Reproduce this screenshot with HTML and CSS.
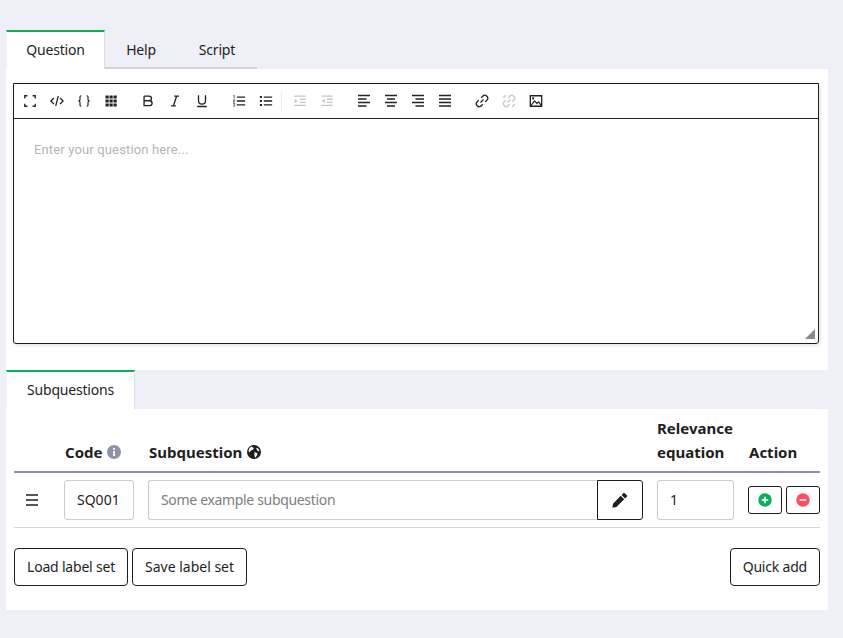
FILE: index.html
```html
<!DOCTYPE html>
<html lang="en">
<head>
  <meta charset="UTF-8">
  <meta name="viewport" content="width=device-width, initial-scale=1.0">
  <title>Question editor</title>
  <link rel="stylesheet" href="styles.css">
</head>
<body>

  <!-- Question tabs -->
  <div class="tabs">
    <div class="tab tab-active tab-question">Question</div>
    <div class="tab tab-plain tab-help">Help</div>
    <div class="tab tab-plain tab-script">Script</div>
  </div>

  <div class="panel editor-panel">
    <div class="editor">
      <div class="toolbar">
        <div class="tool-group">
          <span class="tool"><svg viewBox="0 0 16 16"><path d="M2 5V2h3M11 2h3v3M14 11v3h-3M5 14H2v-3"/></svg></span>
          <span class="tool"><svg viewBox="0 0 16 16"><path d="M4.500 4.500 1 8l3.500 3.500M11.500 4.500 15 8l-3.500 3.500M9.500 2.500l-3 11"/></svg></span>
          <span class="tool"><svg viewBox="0 0 16 16"><path class="mid" d="M5 2h-.3C3.900 2 3.400 2.500 3.400 3.300v3.200C3.400 7.400 2.900 8 1.500 8c1.400 0 1.900.6 1.900 1.500v3.200c0 .8.500 1.300 1.300 1.300H5M11 2h.3c.8 0 1.300.5 1.300 1.300v3.200c0 .9.500 1.500 1.900 1.500-1.400 0-1.900.6-1.900 1.500v3.200c0 .8-.5 1.300-1.300 1.300H11"/></svg></span>
          <span class="tool"><svg viewBox="0 0 14 14"><path class="fill" d="M1.500 1.500h3.200v3H1.500zM5.500 1.500h3.200v3H5.500zM9.500 1.500h3.200v3H9.500zM1.500 5.500h3.200v3H1.500zM5.500 5.500h3.200v3H5.500zM9.500 5.500h3.200v3H9.500zM1.500 9.500h3.200v3H1.500zM5.500 9.500h3.200v3H5.500zM9.500 9.500h3.200v3H9.500z"/></svg></span>
        </div>
        <div class="tool-group">
          <span class="tool"><svg viewBox="0 0 16 16"><path d="M3.500 2.500h5.500c1.900 0 3 1 3 2.600S10.900 7.700 9 7.700H3.500M3.500 7.700h6c2 0 3.200 1 3.200 2.800s-1.200 2.800-3.200 2.800h-6zM3.500 2.500v5.200"/></svg></span>
          <span class="tool"><svg viewBox="0 0 16 16"><path d="M7 2.500h5.500M3.500 13.500H9M9.800 2.500l-3.600 11"/></svg></span>
          <span class="tool"><svg viewBox="0 0 16 16"><path d="M4 1.500v6.300c0 2.400 1.500 3.700 4 3.700s4-1.300 4-3.700V1.500M2.500 14.300h11"/></svg></span>
        </div>
        <div class="tool-group tool-group-split">
          <span class="tool"><svg viewBox="0 0 16 16"><path d="M5.500 3.500H15M5.500 8H15M5.500 12.500H15"/><path class="thin" d="M1.500 2l1-.5v3.500M1.200 6.800h2L1.200 9.200h2M1.200 11h2l-1 1.300c.7 0 1 .4 1 .9s-.5.8-2 .8"/></svg></span>
          <span class="tool"><svg viewBox="0 0 16 16"><path d="M5.500 3.500H15M5.500 8H15M5.500 12.500H15"/><path class="fill" d="M1 2.300h2.400v2.400H1zM1 6.800h2.400v2.400H1zM1 11.300h2.400v2.400H1z"/></svg></span>
        </div>
        <div class="tool-group tool-group-off">
          <span class="tool"><svg viewBox="0 0 16 16"><path d="M1.500 2.500h13M8 6h6.500M8 9.500h6.500M1.500 13h13"/><path class="fill" d="M2 5.500 5.500 8 2 10.500z"/></svg></span>
          <span class="tool"><svg viewBox="0 0 16 16"><path d="M1.500 2.500h13M8 6h6.500M8 9.500h6.500M1.500 13h13"/><path class="fill" d="M5.500 5.500 2 8l3.500 2.500z"/></svg></span>
        </div>
        <div class="tool-group">
          <span class="tool"><svg viewBox="0 0 14 14"><path d="M1 1.500h12M1 5h8.500M1 8.500h12M1 12h8.500"/></svg></span>
          <span class="tool"><svg viewBox="0 0 14 14"><path d="M1 1.500h12M3 5h8M1 8.500h12M3 12h8"/></svg></span>
          <span class="tool"><svg viewBox="0 0 14 14"><path d="M1 1.500h12M4.500 5H13M1 8.500h12M4.500 12H13"/></svg></span>
          <span class="tool"><svg viewBox="0 0 14 14"><path d="M1 1.500h12M1 5h12M1 8.500h12M1 12h12"/></svg></span>
        </div>
        <div class="tool-group">
          <span class="tool"><svg viewBox="0 0 16 16"><path d="M6.300 9.700l3.400-3.400M7 4.300l1.800-1.800a3 3 0 0 1 4.700 4.700l-1.800 1.800M9 11.700l-1.800 1.800a3 3 0 0 1-4.700-4.700l1.800-1.800"/></svg></span>
          <span class="tool tool-off"><svg viewBox="0 0 16 16"><path d="M7.500 4.300l1.300-1.800a3 3 0 0 1 4.700 4.700l-1.800 1.300M8.500 11.700l-1.300 1.800a3 3 0 0 1-4.700-4.700l1.800-1.300M6.300 9.700l3.400-3.400M3.500 1v2.500M1 3.500h2.500M12.500 12.500V15M12.500 12.500H15"/></svg></span>
          <span class="tool"><svg viewBox="0 0 16 16"><path d="M1.500 2h13v12h-13z"/><path class="outline" d="M2 13.500 6.300 7.800l3.400 3.900M9 10.800l2-1.800 3 4"/><circle class="fill" cx="4.800" cy="5" r="1.300"/></svg></span>
        </div>
      </div>
      <div class="editor-body">
        <span class="editor-placeholder">Enter your question here...</span>
        <span class="resize-grip"></span>
      </div>
    </div>
  </div>

  <!-- Subquestions -->
  <div class="tabs tabs-sub">
    <div class="tab tab-active tab-sub">Subquestions</div>
  </div>

  <div class="panel sub-panel">
    <div class="sub-grid sub-head">
      <div></div>
      <div class="head-cell head-indent">Code <svg class="info-icon" viewBox="0 0 14 14"><circle cx="7" cy="7" r="7"/><path d="M6.100 5.900h1.800v5H6.100zM6.100 3h1.800v1.800H6.100z" fill="#fff"/></svg></div>
      <div class="head-cell head-indent">Subquestion <svg class="globe-icon" viewBox="0 0 14 14"><circle cx="7" cy="7" r="7"/><path d="M4.500 1.500 6.800 3 6 4.800 3.800 5.500 2.500 7.500 1.500 6 2.500 3zM7.500 7l3 1.200-.5 2.300-1.800 2.300-.8-2.500zM10 2.500l2 2.200.3 1.800-1.800-.8-1.200-2z" fill="#fff"/></svg></div>
      <div class="head-cell">Relevance equation</div>
      <div class="head-cell head-indent">Action</div>
    </div>

    <div class="sub-grid sub-row">
      <div class="drag-handle"><span></span><span></span><span></span></div>
      <input class="field field-code" value="SQ001">
      <div class="input-group">
        <input class="field field-text" placeholder="Some example subquestion">
        <button class="edit-btn"><svg viewBox="0 0 16 16"><path d="M11.300 1.200a1 1 0 0 1 1.400 0l2.100 2.100a1 1 0 0 1 0 1.400l-1.700 1.700-3.500-3.500zM8.700 3.800l3.500 3.500-7.800 7.800-4 .6.600-4z"/></svg></button>
      </div>
      <input class="field field-rel" value="1">
      <div class="actions">
        <button class="icon-btn"><svg viewBox="0 0 14 14"><circle cx="7" cy="7" r="6.700" fill="#0ead5c"/><path d="M7 3.700v6.600M3.700 7h6.600" stroke="#fff" stroke-width="1.500"/></svg></button>
        <button class="icon-btn"><svg viewBox="0 0 14 14"><circle cx="7" cy="7" r="6.700" fill="#ff4d60"/><path d="M3.700 7h6.600" stroke="#fff" stroke-width="1.500"/></svg></button>
      </div>
    </div>

    <div class="button-row">
      <button class="btn">Load label set</button>
      <button class="btn btn-save">Save label set</button>
      <button class="btn btn-right">Quick add</button>
    </div>
  </div>

</body>
</html>
```

FILE: styles.css
```css
body {
  font-family: "Noto Sans", Roboto, sans-serif;
  font-size: 14px;
  color: #1e1e1e;
  margin: 0;
  padding: 30px 15px 28px 6px;
  background-color: #eeeff7;
}

/* Tabs */
.tabs {
  display: flex;
  height: 39px;
}

.tab {
  box-sizing: border-box;
  height: 39px;
  text-align: center;
  font-size: 14px;
  letter-spacing: -0.2px;
}

.tab-active {
  background-color: #fff;
  border-top: 2px solid #0ead5c;
  border-left: 1px solid #f2f3f8;
  border-right: 1px solid #dcdee6;
  line-height: 35px;
}

.tab-plain {
  border-bottom: 2px solid #d2d3da;
  line-height: 39px;
}

.tab-question { width: 99px; }
.tab-help { width: 72px; }
.tab-script { width: 80px; }
.tab-sub { width: 129px; }

/* Panels */
.panel {
  background-color: #fff;
}

.editor-panel {
  height: 301px;
  padding: 14px 9px 0 7px;
  box-sizing: border-box;
}

/* Editor */
.editor {
  box-sizing: border-box;
  height: 261px;
  border: 1px solid #1e1e1e;
  border-radius: 0 0 3px 3px;
  box-shadow: 1px 1px 4px rgba(30, 30, 60, 0.14);
  display: flex;
  flex-direction: column;
}

.toolbar {
  display: flex;
  height: 34px;
  padding-left: 2px;
  border-bottom: 1px solid #1e1e1e;
  align-items: center;
}

.tool-group {
  display: flex;
  margin-right: 10px;
}

.tool-group-split {
  position: relative;
  margin-right: 7px;
}

.tool-group-split::after {
  content: "";
  position: absolute;
  right: -3px;
  top: 4px;
  bottom: 4px;
  width: 1px;
  background-color: #eeeeee;
}

.tool {
  width: 27px;
  height: 28px;
  display: flex;
  align-items: center;
  justify-content: center;
}

.tool svg {
  width: 14px;
  height: 14px;
  fill: none;
  stroke: #222;
  stroke-width: 1.5;
}

.tool svg .fill {
  fill: #222;
  stroke: none;
}

.tool svg .mid {
  stroke-width: 1.3;
}

.tool svg .thin {
  stroke-width: 0.8;
}

.tool-group-off .tool svg,
.tool-off svg {
  opacity: 0.25;
}

.editor-body {
  flex: 1;
  position: relative;
  padding: 20px;
}

.editor-placeholder {
  font-family: Roboto, sans-serif;
  font-size: 13px;
  letter-spacing: 0.15px;
  color: #b5b5b5;
}

.resize-grip {
  position: absolute;
  right: 3px;
  bottom: 4px;
  width: 0;
  height: 0;
  border-left: 10px solid transparent;
  border-bottom: 10px solid #8a8a8a;
}

/* Subquestion table */
.sub-panel {
  height: 201px;
  padding: 0 8px;
  box-sizing: border-box;
}

.sub-grid {
  display: grid;
  grid-template-columns: 36px 70px 495px 77px 72px;
  column-gap: 14px;
}

.sub-head {
  height: 64px;
  box-sizing: border-box;
  align-items: end;
  padding-bottom: 7px;
  border-bottom: 2px solid #8f92a6;
}

.head-cell {
  font-size: 15px;
  font-weight: 700;
  line-height: 24px;
  color: #1e1e1e;
}

.head-indent {
  padding-left: 1px;
}

.info-icon,
.globe-icon {
  width: 14px;
  height: 14px;
  vertical-align: -1px;
  margin-left: 1px;
}

.info-icon { fill: #8f92a6; }
.globe-icon { fill: #1e1e1e; }

.sub-row {
  height: 55px;
  box-sizing: border-box;
  padding-top: 7px;
  border-bottom: 1px solid #d5d5d5;
}

.drag-handle {
  display: flex;
  flex-direction: column;
  gap: 3px;
  width: 12px;
  margin: 14px 0 0 12px;
}

.drag-handle span {
  height: 2px;
  background-color: #555;
}

.field {
  box-sizing: border-box;
  height: 40px;
  border: 1px solid #ccc;
  border-radius: 3px;
  font-family: "Noto Sans", Roboto, sans-serif;
  font-size: 14px;
  color: #1e1e1e;
  padding: 0 12px 2px;
  min-width: 0;
  width: 100%;
}

.field::placeholder {
  color: #7e7e7e;
  letter-spacing: -0.33px;
}

.input-group {
  display: flex;
}

.field-text {
  flex: 1;
  border-right: 0;
  border-radius: 3px 0 0 3px;
}

.edit-btn {
  box-sizing: border-box;
  width: 46px;
  height: 40px;
  padding: 0;
  background-color: #fff;
  border: 1px solid #1e1e1e;
  border-radius: 0 3px 3px 0;
  display: flex;
  align-items: center;
  justify-content: center;
}

.edit-btn svg {
  width: 16px;
  height: 16px;
  fill: #1e1e1e;
}

.actions {
  display: flex;
  gap: 4px;
  padding-top: 6px;
}

.icon-btn {
  box-sizing: border-box;
  width: 34px;
  height: 28px;
  padding: 0;
  background-color: #fff;
  border: 1px solid #1e1e1e;
  border-radius: 3px;
  display: flex;
  align-items: center;
  justify-content: center;
}

.icon-btn svg {
  width: 14px;
  height: 14px;
}

/* Bottom buttons */
.button-row {
  display: flex;
  gap: 4px;
  padding-top: 20px;
}

.btn {
  box-sizing: border-box;
  height: 38px;
  padding: 0 12px 2px;
  background-color: #fff;
  border: 1px solid #1e1e1e;
  border-radius: 4px;
  font-family: "Noto Sans", Roboto, sans-serif;
  font-size: 14px;
  letter-spacing: -0.2px;
  color: #1e1e1e;
}

.btn-save {
  letter-spacing: 0;
}

.btn-right {
  margin-left: auto;
}

.tool svg .outline {
  stroke-width: 1.3;
}
```
